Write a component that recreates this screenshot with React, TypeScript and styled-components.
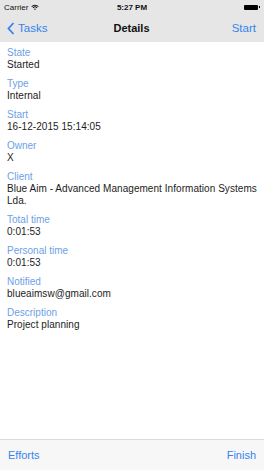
import styled, { createGlobalStyle } from 'styled-components'

const GlobalStyle = createGlobalStyle`
  html, body {
    margin: 0;
    padding: 0;
    background: #ffffff;
  }
  body {
    font-family: "Liberation Sans", Arial, sans-serif;
    -webkit-font-smoothing: antialiased;
  }
`

const Screen = styled.div`
  width: 264px;
  height: 470px;
  display: flex;
  flex-direction: column;
  background: #ffffff;
  overflow: hidden;
`

const Header = styled.header`
  background: #e6e6e6;
  display: flex;
  flex-direction: column;
`

const StatusBar = styled.div`
  height: 14px;
  display: grid;
  grid-template-columns: 1fr auto 1fr;
  align-items: center;
  padding: 0 4px;
  font-size: 8px;
  color: #111;
`

const Carrier = styled.div`
  display: flex;
  align-items: center;
  gap: 3px;
`

const Clock = styled.div`
  font-weight: bold;
`

const Battery = styled.div`
  justify-self: end;
  display: flex;
  align-items: center;
  gap: 1px;
`

const BatteryBody = styled.span`
  width: 14px;
  height: 5px;
  background: #000;
  border-radius: 1px;
`

const BatteryTip = styled.span`
  width: 1px;
  height: 2px;
  background: #000;
`

const NavBar = styled.div`
  height: 28px;
  display: grid;
  grid-template-columns: 1fr auto 1fr;
  align-items: center;
  padding: 0 8px 0 7px;
`

const NavButton = styled.div<{ $right?: boolean }>`
  display: flex;
  align-items: center;
  gap: 3px;
  color: #3583ef;
  font-size: 11.5px;
  justify-self: ${p => (p.$right ? 'end' : 'start')};
`

const Title = styled.div`
  font-size: 11px;
  font-weight: bold;
  color: #111;
`

const Content = styled.main`
  flex: 1;
  padding: 5px 2px 0 7px;
  display: flex;
  flex-direction: column;
  gap: 7px;
`

const Field = styled.div`
  display: flex;
  flex-direction: column;
`

const Label = styled.div`
  font-size: 10px;
  line-height: 12px;
  color: #6e9fe6;
`

const Value = styled.div`
  font-size: 10px;
  line-height: 12px;
  color: #1c1c1c;
  letter-spacing: 0.05px;
`

const Toolbar = styled.footer`
  height: 30px;
  background: #f7f7f7;
  border-top: 1px solid #dcdcdc;
  display: flex;
  align-items: center;
  justify-content: space-between;
  padding: 0 8px;
  color: #3583ef;
  font-size: 11px;
`

const fields: [string, string][] = [
  ['State', 'Started'],
  ['Type', 'Internal'],
  ['Start', '16-12-2015 15:14:05'],
  ['Owner', 'X'],
  ['Client', 'Blue Aim - Advanced Management Information Systems Lda.'],
  ['Total time', '0:01:53'],
  ['Personal time', '0:01:53'],
  ['Notified', 'blueaimsw@gmail.com'],
  ['Description', 'Project planning'],
]

function App() {
  return (
    <Screen>
      <GlobalStyle />
      <Header>
        <StatusBar>
          <Carrier>
            Carrier
            <svg width="8" height="6" viewBox="0 0 8 6">
              <path d="M0.3 2.2 A5.2 5.2 0 0 1 7.7 2.2 L7 2.9 A4.2 4.2 0 0 0 1 2.9 Z" fill="#111" />
              <path d="M1.6 3.5 A3.4 3.4 0 0 1 6.4 3.5 L5.7 4.2 A2.4 2.4 0 0 0 2.3 4.2 Z" fill="#111" />
              <path d="M3 4.9 A1.5 1.5 0 0 1 5 4.9 L4 6 Z" fill="#111" />
            </svg>
          </Carrier>
          <Clock>5:27 PM</Clock>
          <Battery>
            <BatteryBody />
            <BatteryTip />
          </Battery>
        </StatusBar>
        <NavBar>
          <NavButton>
            <svg width="8" height="13" viewBox="0 0 8 13">
              <path d="M6.5 1 L1.5 6.5 L6.5 12" fill="none" stroke="#3583ef" strokeWidth="1.8" />
            </svg>
            Tasks
          </NavButton>
          <Title>Details</Title>
          <NavButton $right>Start</NavButton>
        </NavBar>
      </Header>
      <Content>
        {fields.map(([label, value]) => (
          <Field key={label}>
            <Label>{label}</Label>
            <Value>{value}</Value>
          </Field>
        ))}
      </Content>
      <Toolbar>
        <span>Efforts</span>
        <span>Finish</span>
      </Toolbar>
    </Screen>
  )
}

export default App
